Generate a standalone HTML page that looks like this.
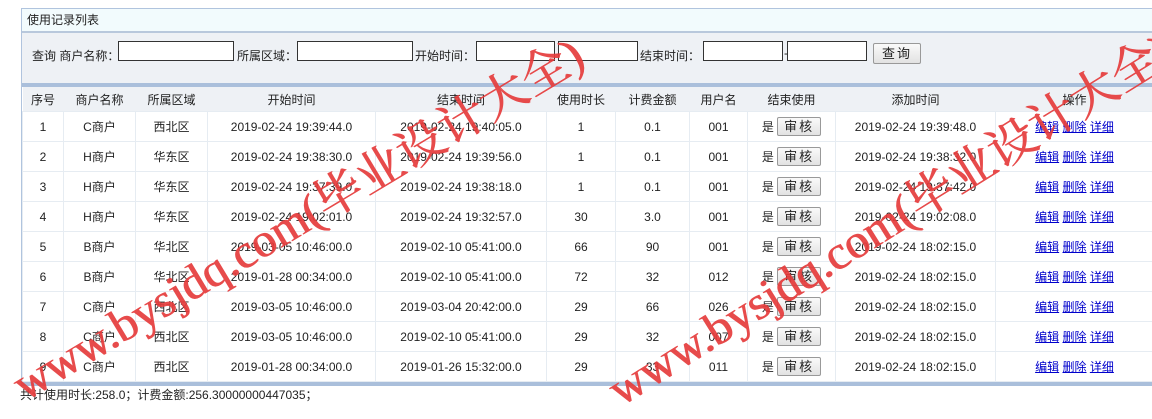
<!DOCTYPE html>
<html><head><meta charset="utf-8"><style>
body{margin:0;width:1152px;height:413px;overflow:hidden;background:#fff;font-family:"Liberation Sans","Noto Sans CJK SC",sans-serif;font-size:12px;color:#222;position:relative}
.panel{position:absolute;left:21px;top:8px;width:1140px;height:378px;border-left:1px solid #b0c4de;border-top:1px solid #b0c4de}
.title{height:22px;line-height:22px;background:#f2fbfd;padding-left:5px;border-bottom:2px solid #b8c8dc}
.search{height:50px;background:#eef1f5;position:relative}
.search span.l{position:absolute;top:14px;font-size:12px}
.btn{display:inline-block;border:1px solid #999;border-radius:2px;background:linear-gradient(#fafafa,#e2e2e2);height:19px;line-height:18px;box-sizing:border-box;padding:0 6px;font-size:13px;letter-spacing:2px}
.bar{height:4px;background:#aabfdb}
table{border-collapse:collapse;table-layout:fixed;width:1131px}
th{font-weight:normal;height:24px;background:#eef1f5;font-size:12px;padding:0}
td{height:29px;border:1px solid #e6ecf2;text-align:center;font-size:12px;padding:0}
a{color:#00c;text-decoration:underline}
.foot{position:absolute;left:21px;top:382px;width:1140px;height:4px;background:#aabfdb}
.ft{position:absolute;left:20px;top:386px;font-size:12px}
.wm{position:absolute;font-family:"Liberation Serif","Noto Serif CJK SC",serif;font-size:48px;color:#e63c3c;transform-origin:0 100%;white-space:nowrap;opacity:.92;text-shadow:1px 0 0 #e63c3c}
</style></head><body>
<div class="panel">
<div class="title">使用记录列表</div>
<div class="search">
<span class="l" style="left:10px">查询 商户名称：</span>
<span class="l" style="left:215px">所属区域：</span>
<span class="l" style="left:393px">开始时间：</span>
<span class="l" style="left:534px;top:13px">-</span>
<span class="l" style="left:618px">结束时间：</span>
<span class="l" style="left:762px;top:13px">-</span>
<span class="btn" style="position:absolute;left:851px;top:10px;height:21px;line-height:20px;padding:0 8px">查询</span>
</div>
<div class="bar"></div>
<table>
<colgroup><col style="width:41px"><col style="width:72px"><col style="width:72px"><col style="width:168px"><col style="width:171px"><col style="width:69px"><col style="width:74px"><col style="width:58px"><col style="width:88px"><col style="width:160px"><col style="width:158px"></colgroup>
<tr><th>序号</th><th>商户名称</th><th>所属区域</th><th>开始时间</th><th>结束时间</th><th>使用时长</th><th>计费金额</th><th>用户名</th><th>结束使用</th><th>添加时间</th><th>操作</th></tr>
<tr><td>1</td><td>C商户</td><td>西北区</td><td>2019-02-24 19:39:44.0</td><td>2019-02-24 19:40:05.0</td><td>1</td><td>0.1</td><td>001</td><td>是 <span class="btn">审核</span></td><td>2019-02-24 19:39:48.0</td><td><a>编辑</a> <a>删除</a> <a>详细</a></td></tr>
<tr><td>2</td><td>H商户</td><td>华东区</td><td>2019-02-24 19:38:30.0</td><td>2019-02-24 19:39:56.0</td><td>1</td><td>0.1</td><td>001</td><td>是 <span class="btn">审核</span></td><td>2019-02-24 19:38:32.0</td><td><a>编辑</a> <a>删除</a> <a>详细</a></td></tr>
<tr><td>3</td><td>H商户</td><td>华东区</td><td>2019-02-24 19:37:39.0</td><td>2019-02-24 19:38:18.0</td><td>1</td><td>0.1</td><td>001</td><td>是 <span class="btn">审核</span></td><td>2019-02-24 19:37:42.0</td><td><a>编辑</a> <a>删除</a> <a>详细</a></td></tr>
<tr><td>4</td><td>H商户</td><td>华东区</td><td>2019-02-24 19:02:01.0</td><td>2019-02-24 19:32:57.0</td><td>30</td><td>3.0</td><td>001</td><td>是 <span class="btn">审核</span></td><td>2019-02-24 19:02:08.0</td><td><a>编辑</a> <a>删除</a> <a>详细</a></td></tr>
<tr><td>5</td><td>B商户</td><td>华北区</td><td>2019-03-05 10:46:00.0</td><td>2019-02-10 05:41:00.0</td><td>66</td><td>90</td><td>001</td><td>是 <span class="btn">审核</span></td><td>2019-02-24 18:02:15.0</td><td><a>编辑</a> <a>删除</a> <a>详细</a></td></tr>
<tr><td>6</td><td>B商户</td><td>华北区</td><td>2019-01-28 00:34:00.0</td><td>2019-02-10 05:41:00.0</td><td>72</td><td>32</td><td>012</td><td>是 <span class="btn">审核</span></td><td>2019-02-24 18:02:15.0</td><td><a>编辑</a> <a>删除</a> <a>详细</a></td></tr>
<tr><td>7</td><td>C商户</td><td>西北区</td><td>2019-03-05 10:46:00.0</td><td>2019-03-04 20:42:00.0</td><td>29</td><td>66</td><td>026</td><td>是 <span class="btn">审核</span></td><td>2019-02-24 18:02:15.0</td><td><a>编辑</a> <a>删除</a> <a>详细</a></td></tr>
<tr><td>8</td><td>C商户</td><td>西北区</td><td>2019-03-05 10:46:00.0</td><td>2019-02-10 05:41:00.0</td><td>29</td><td>32</td><td>007</td><td>是 <span class="btn">审核</span></td><td>2019-02-24 18:02:15.0</td><td><a>编辑</a> <a>删除</a> <a>详细</a></td></tr>
<tr><td>9</td><td>C商户</td><td>西北区</td><td>2019-01-28 00:34:00.0</td><td>2019-01-26 15:32:00.0</td><td>29</td><td>33</td><td>011</td><td>是 <span class="btn">审核</span></td><td>2019-02-24 18:02:15.0</td><td><a>编辑</a> <a>删除</a> <a>详细</a></td></tr>
</table>
</div>
<input style="position:absolute;left:118px;top:41px;width:116px;height:20px;border:1px solid #333;box-sizing:border-box;margin:0">
<input style="position:absolute;left:297px;top:41px;width:116px;height:20px;border:1px solid #333;box-sizing:border-box;margin:0">
<input style="position:absolute;left:476px;top:41px;width:79px;height:20px;border:1px solid #333;box-sizing:border-box;margin:0">
<input style="position:absolute;left:558px;top:41px;width:80px;height:20px;border:1px solid #333;box-sizing:border-box;margin:0">
<input style="position:absolute;left:703px;top:41px;width:80px;height:20px;border:1px solid #333;box-sizing:border-box;margin:0">
<input style="position:absolute;left:787px;top:41px;width:80px;height:20px;border:1px solid #333;box-sizing:border-box;margin:0">
<div class="foot"></div>
<div class="ft">共计使用时长:258.0；计费金额:256.30000000447035；</div>
<div class="wm" style="left:32px;top:345px;transform:rotate(-31deg)">www.bysjdq.com(毕业设计大全)</div>
<div class="wm" style="left:628px;top:350px;transform:rotate(-32deg)">www.bysjdq.com(毕业设计大全)</div>
</body></html>
